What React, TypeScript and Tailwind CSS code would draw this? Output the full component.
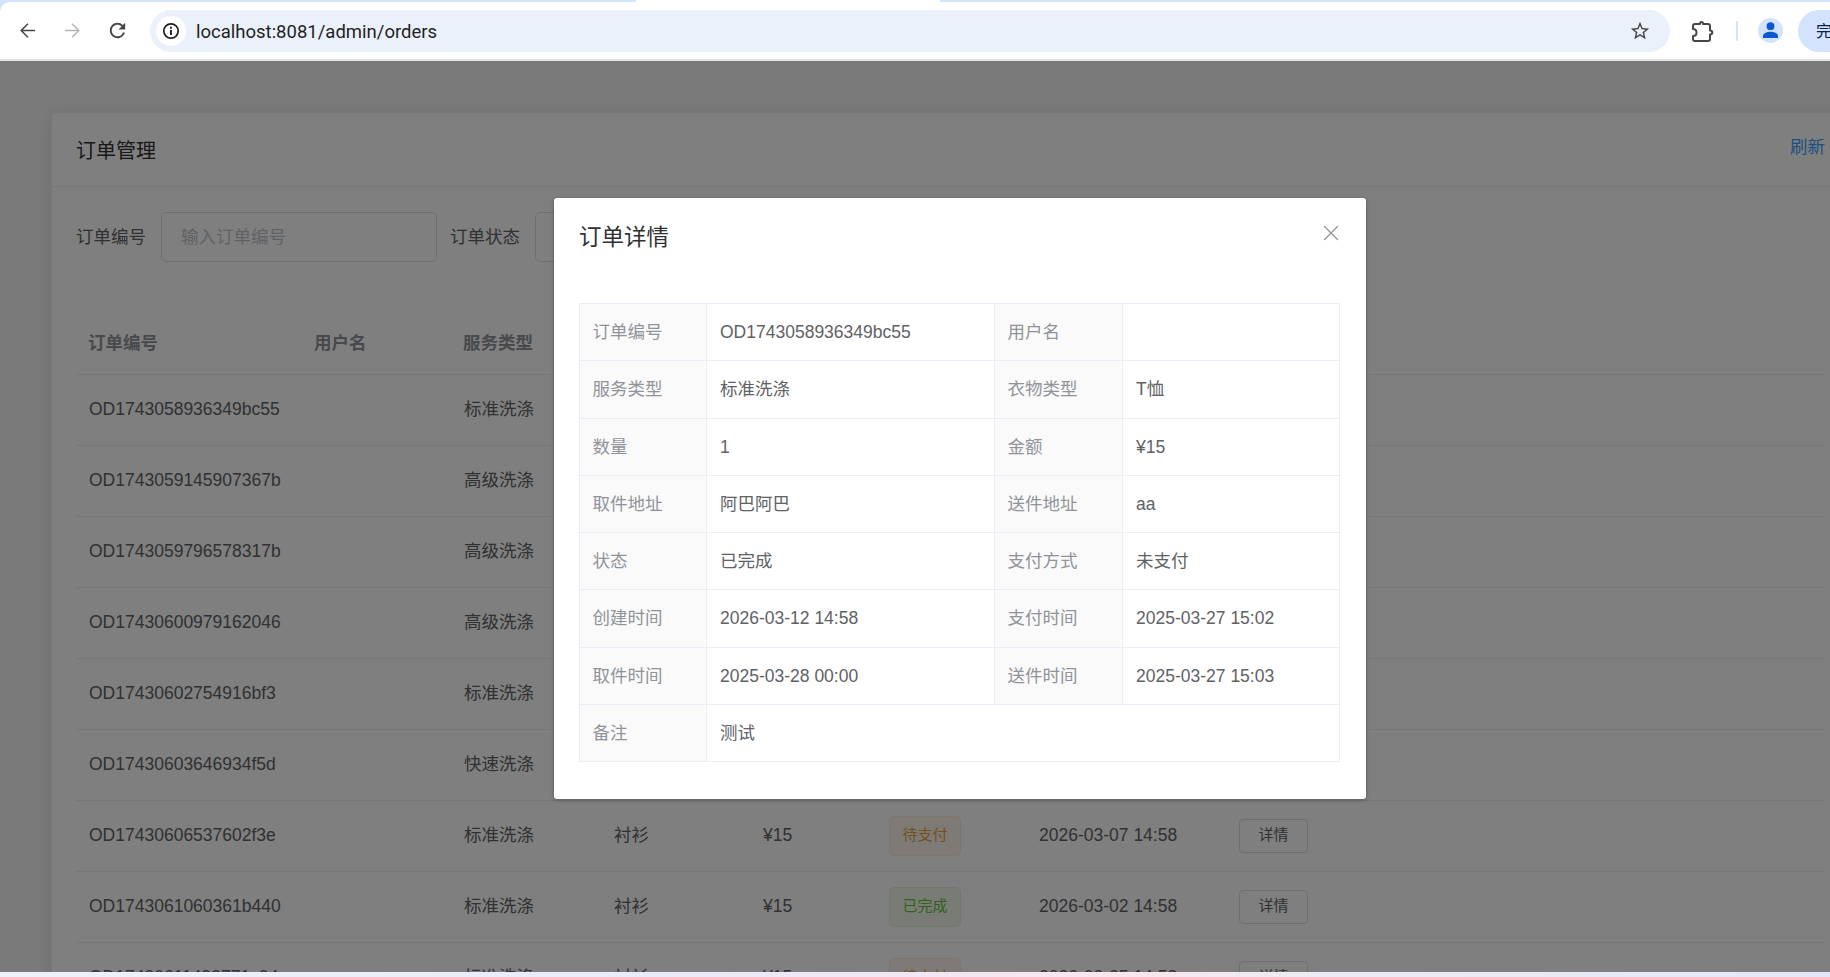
import { X } from "lucide-react";

type Status = "待支付" | "已完成";

type Order = {
  no: string;
  service: string;
  cloth: string;
  amount: string;
  status: Status;
  created: string;
};

const orders: Order[] = [
  { no: "OD1743058936349bc55", service: "标准洗涤", cloth: "T恤", amount: "¥15", status: "已完成", created: "2026-03-12 14:58" },
  { no: "OD1743059145907367b", service: "高级洗涤", cloth: "衬衫", amount: "¥30", status: "待支付", created: "2026-03-11 14:58" },
  { no: "OD1743059796578317b", service: "高级洗涤", cloth: "衬衫", amount: "¥30", status: "已完成", created: "2026-03-10 14:58" },
  { no: "OD17430600979162046", service: "高级洗涤", cloth: "衬衫", amount: "¥30", status: "待支付", created: "2026-03-09 14:58" },
  { no: "OD17430602754916bf3", service: "标准洗涤", cloth: "衬衫", amount: "¥15", status: "已完成", created: "2026-03-08 14:58" },
  { no: "OD17430603646934f5d", service: "快速洗涤", cloth: "衬衫", amount: "¥20", status: "待支付", created: "2026-03-08 10:58" },
  { no: "OD17430606537602f3e", service: "标准洗涤", cloth: "衬衫", amount: "¥15", status: "待支付", created: "2026-03-07 14:58" },
  { no: "OD1743061060361b440", service: "标准洗涤", cloth: "衬衫", amount: "¥15", status: "已完成", created: "2026-03-02 14:58" },
  { no: "OD17430611493771c94", service: "标准洗涤", cloth: "衬衫", amount: "¥15", status: "待支付", created: "2026-02-25 14:58" },
];

const columns = ["订单编号", "用户名", "服务类型", "衣物类型", "金额", "状态", "创建时间", "操作"];

function BrowserBar() {
  return (
    <div className="h-[61px] shrink-0 bg-[#d3e3fd]">
      <div className="flex h-[2px]">
        <div className="w-[636px]" />
        <div className="w-[304px] bg-white" />
      </div>
      <div className="flex h-[57px] items-center rounded-tl-[10px] bg-white">
        <svg width="23" height="23" viewBox="0 0 24 24" className="ml-[16px] fill-[#444746]">
          <path d="M20 11.2H7.3l5.7-5.7L11.9 4.4 4.3 12l7.6 7.6 1.1-1.1-5.7-5.7H20z" />
        </svg>
        <svg width="23" height="23" viewBox="0 0 24 24" className="ml-[22px] fill-[#b4b6b8]">
          <path d="M4 11.2h12.7l-5.7-5.7 1.1-1.1 7.6 7.6-7.6 7.6-1.1-1.1 5.7-5.7H4z" />
        </svg>
        <svg width="23" height="23" viewBox="0 0 24 24" className="ml-[22px] fill-[#444746]">
          <path d="M17.65 6.35A7.958 7.958 0 0 0 12 4c-4.42 0-7.99 3.58-7.99 8s3.57 8 7.99 8c3.73 0 6.84-2.55 7.73-6h-2.08A5.99 5.99 0 0 1 12 18c-3.31 0-6-2.69-6-6s2.69-6 6-6c1.66 0 3.14.69 4.22 1.78L13 11h7V4l-2.35 2.35z" />
        </svg>

        <div className="ml-[21px] flex h-[42px] w-[1520px] items-center rounded-full bg-[#ebf1fa] pl-[6px] pr-[19px]">
          <div className="flex h-[30px] w-[30px] items-center justify-center rounded-full bg-white">
            <svg width="18" height="18" viewBox="0 0 18 18" fill="none" className="stroke-[#1f1f1f]">
              <circle cx="9" cy="9" r="7.2" strokeWidth="1.7" />
              <path d="M9 8v5" strokeWidth="1.9" />
              <path d="M9 4.8v1.9" strokeWidth="1.9" />
            </svg>
          </div>
          <span className="ml-[10px] pt-[5px] font-['Roboto',sans-serif] text-[18.5px] text-[#1f1f1f]">localhost:8081/admin/orders</span>
          <svg width="22" height="22" viewBox="0 0 24 24" className="ml-auto fill-[#444746]">
            <path d="M22 9.24l-7.19-.62L12 2 9.19 8.63 2 9.24l5.46 4.73L5.82 21 12 17.27 18.18 21l-1.63-7.03L22 9.24zM12 15.4l-3.76 2.27 1-4.28-3.32-2.88 4.38-.38L12 6.1l1.71 4.04 4.38.38-3.32 2.88 1 4.28L12 15.4z" />
          </svg>
        </div>

        <svg width="24" height="24" viewBox="0 0 24 24" fill="none" className="ml-[21px] stroke-[#444746]" strokeWidth="2" strokeLinejoin="round">
          <path d="M4 5H9C9 3.8 9.5 3 10.5 3S12 3.8 12 5H17a2 2 0 0 1 2 2V11.5C20.5 11.5 21.3 12.3 21.3 13.5S20.5 15.5 19 15.5V20a2 2 0 0 1-2 2H4a2 2 0 0 1-2-2V17C4 17 5.5 15.5 5.5 13.5S4 10 2 10V7a2 2 0 0 1 2-2z" />
        </svg>
        <div className="ml-[21px] h-[20px] w-[2px] rounded-full bg-[#d3e3fd]" />
        <div className="ml-[20px] flex h-[25px] w-[25px] items-center justify-center rounded-full bg-[#d3e3fd]">
          <svg width="17" height="17" viewBox="0 0 17 17" className="fill-[#0b57d0]">
            <circle cx="8.5" cy="4.2" r="3.9" />
            <path d="M1 16v-1.8C1 11.6 4.4 9.8 8.5 9.8s7.5 1.8 7.5 4.4V16z" />
          </svg>
        </div>
        <div className="ml-[15px] flex h-[42px] flex-1 items-center overflow-hidden rounded-l-full bg-[#d3e3fd] pl-[18px]">
          <span className="whitespace-nowrap pt-[2px] text-[16px] text-[#041e49]">完成更新</span>
        </div>
      </div>
      <div className="h-[2px] bg-[#e3e3e3]" />
    </div>
  );
}

function StatusTag({ status }: { status: Status }) {
  const color =
    status === "已完成"
      ? "border-[#e1f3d8] bg-[#f0f9eb] text-[#67c23a]"
      : "border-[#faecd8] bg-[#fdf6ec] text-[#e6a23c]";
  return (
    <span className={`inline-flex h-[40px] w-[72px] items-center justify-center rounded-[5px] border text-[15px] ${color}`}>
      {status}
    </span>
  );
}

function OrdersCard() {
  return (
    <div className="w-[1799px] rounded-[5px] border border-[#ebeef5] bg-white text-[17.5px] text-[#606266] shadow-[0_2px_15px_rgba(0,0,0,0.1)]">
      <div className="flex h-[74px] items-center justify-between border-b border-[#ebeef5] px-[24px]">
        <span className="pt-[2px] text-[20px] text-[#303133]">订单管理</span>
        <span className="-mt-[4px] text-[#409eff]">刷新</span>
      </div>

      <div className="px-[24px] pt-[25px]">
        <div className="flex h-[50px] items-center">
          <span className="w-[70px]">订单编号</span>
          <div className="ml-[15px] flex h-full w-[276px] items-center rounded-[5px] border border-[#dcdfe6] px-[19px] text-[#c0c4cc]">
            输入订单编号
          </div>
          <span className="ml-[13px] w-[70px]">订单状态</span>
          <div className="ml-[15px] flex h-full w-[276px] items-center rounded-[5px] border border-[#dcdfe6] px-[19px] text-[#c0c4cc]">
            选择状态
          </div>
        </div>

        <table className="mt-[51px] w-[1749px] table-fixed border-collapse text-left">
          <colgroup>
            <col className="w-[226px]" />
            <col className="w-[149px]" />
            <col className="w-[150px]" />
            <col className="w-[149px]" />
            <col className="w-[126px]" />
            <col className="w-[150px]" />
            <col className="w-[200px]" />
            <col />
          </colgroup>
          <thead>
            <tr className="h-[61px] border-b border-[#ebeef5]">
              {columns.map((c) => (
                <th key={c} className="px-[12px] font-bold text-[#909399]">
                  {c}
                </th>
              ))}
            </tr>
          </thead>
          <tbody>
            {orders.map((o) => (
              <tr key={o.no} className="h-[71px] border-b border-[#ebeef5]">
                <td className="px-[13px]">{o.no}</td>
                <td className="px-[13px]" />
                <td className="px-[13px]">{o.service}</td>
                <td className="px-[13px]">{o.cloth}</td>
                <td className="px-[13px]">{o.amount}</td>
                <td className="px-[13px]">
                  <StatusTag status={o.status} />
                </td>
                <td className="px-[13px]">{o.created}</td>
                <td className="px-[13px]">
                  <button className="h-[34px] w-[69px] rounded-[4px] border border-[#dcdfe6] bg-white text-[15px] text-[#606266]">详情</button>
                </td>
              </tr>
            ))}
          </tbody>
        </table>
      </div>
    </div>
  );
}

function Field({ label, value, span }: { label: string; value: string; span?: number }) {
  return (
    <>
      <th className="border border-[#ebeef5] bg-[#fafafa] px-[12.5px] text-left font-normal text-[#909399]">{label}</th>
      <td colSpan={span} className="border border-[#ebeef5] px-[13px] text-[#606266]">
        {value}
      </td>
    </>
  );
}

function DetailDialog() {
  return (
    <div className="relative ml-[554px] mt-[137px] w-[812px] rounded-[3px] bg-white px-[25px] pb-[37px] shadow-[0_1px_4px_rgba(0,0,0,0.3)]">
      <div className="h-[105px] pt-[26px]">
        <span className="text-[22.5px] leading-[28px] text-[#303133]">订单详情</span>
      </div>
      <button className="absolute right-[29px] top-[28px] text-[#909399]">
        <X size={26} strokeWidth={1.1} className="-m-[6.5px]" />
      </button>

      <table className="w-[761px] table-fixed border-collapse text-[17.5px]">
        <colgroup>
          <col className="w-[127px]" />
          <col className="w-[288px]" />
          <col className="w-[128px]" />
          <col />
        </colgroup>
        <tbody>
          <tr className="h-[57.25px]">
            <Field label="订单编号" value="OD1743058936349bc55" />
            <Field label="用户名" value="" />
          </tr>
          <tr className="h-[57.25px]">
            <Field label="服务类型" value="标准洗涤" />
            <Field label="衣物类型" value="T恤" />
          </tr>
          <tr className="h-[57.25px]">
            <Field label="数量" value="1" />
            <Field label="金额" value="¥15" />
          </tr>
          <tr className="h-[57.25px]">
            <Field label="取件地址" value="阿巴阿巴" />
            <Field label="送件地址" value="aa" />
          </tr>
          <tr className="h-[57.25px]">
            <Field label="状态" value="已完成" />
            <Field label="支付方式" value="未支付" />
          </tr>
          <tr className="h-[57.25px]">
            <Field label="创建时间" value="2026-03-12 14:58" />
            <Field label="支付时间" value="2025-03-27 15:02" />
          </tr>
          <tr className="h-[57.25px]">
            <Field label="取件时间" value="2025-03-28 00:00" />
            <Field label="送件时间" value="2025-03-27 15:03" />
          </tr>
          <tr className="h-[57.25px]">
            <Field label="备注" value="测试" span={3} />
          </tr>
        </tbody>
      </table>
    </div>
  );
}

export default function App() {
  return (
    <div className="flex h-[977px] w-[1830px] flex-col overflow-hidden font-['Liberation_Sans','Noto_Sans_CJK_SC',sans-serif]">
      <BrowserBar />

      <main className="relative flex-1 overflow-hidden bg-[#f5f5f5] pl-[51px] pt-[51px]">
        <OrdersCard />

        {/* modal mask */}
        <div className="absolute inset-0 bg-black/50">
          <DetailDialog />
        </div>
      </main>

      <div className="h-[5px] shrink-0 bg-[linear-gradient(90deg,#eef0fa,#e9ebf8_35%,#efe7f6_45%,#f9e6ee_62%,#ecebf3_72%,#e3e7f7)]" />
    </div>
  );
}
